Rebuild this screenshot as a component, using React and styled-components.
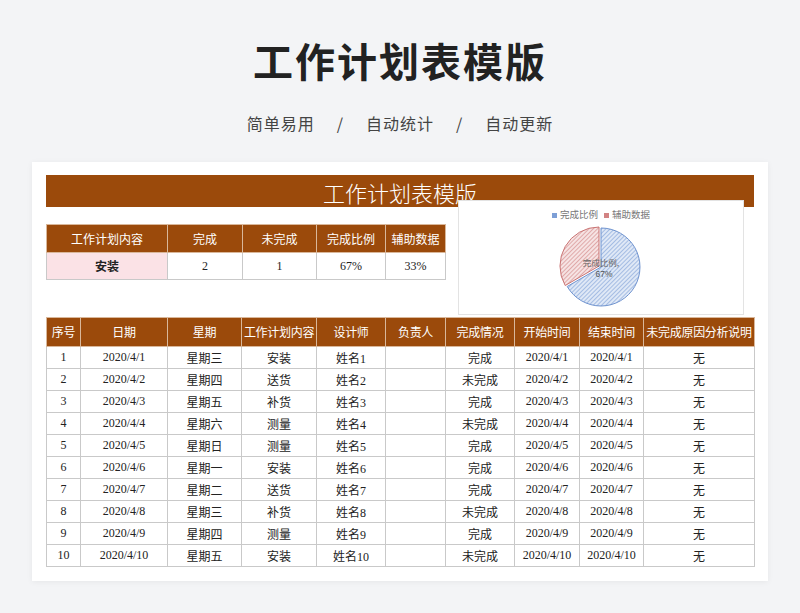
import React from 'react'
import styled, { createGlobalStyle } from 'styled-components'

const Global = createGlobalStyle`
  html, body { margin: 0; padding: 0; background: #f3f4f6; }
  body { font-family: "Liberation Serif", "Noto Sans CJK SC", serif; }
`

const BROWN = '#9b4a0b'

const Page = styled.div`
  width: 800px;
  height: 613px;
  overflow: hidden;
  display: flex;
  flex-direction: column;
  align-items: center;
`

const Title = styled.h1`
  margin: 34px 0 0;
  font: 700 40px/52px "Noto Sans CJK SC", sans-serif;
  color: #222;
  letter-spacing: 2px;
`

const Subtitle = styled.div`
  margin-top: 27px;
  display: flex;
  gap: 22px;
  font: 400 16px/20px "Noto Sans CJK SC", sans-serif;
  color: #444;
  letter-spacing: 1px;
`

const Card = styled.div`
  margin-top: 29px;
  width: 708px;
  padding: 13px 14px 14px;
  background: #fff;
  box-shadow: 0 1px 6px rgba(0,0,0,0.06);
  position: relative;
`

const Banner = styled.div`
  height: 32px;
  background: ${BROWN};
  color: #fff;
  text-align: center;
  font: 300 22px/34px "Noto Sans CJK SC", sans-serif;
`

const Grid = styled.table`
  border-collapse: collapse;
  table-layout: fixed;
  font-size: 12px;
  color: #222;
  td, th { border: 1px solid #c9c9c9; text-align: center; padding: 0; white-space: nowrap; overflow: hidden; }
  th { background: ${BROWN}; color: #fff; font-weight: 400; border-color: #d9b79a; }
`

const Summary = styled(Grid)`
  margin-top: 17px;
  width: 399px;
  th { height: 27px; font-size: 12px; }
  td { height: 26px; }
`

const Pink = styled.td`
  background: #fbe2e6;
  font-weight: 700;
`

const Main = styled(Grid)`
  margin-top: 37px;
  width: 708px;
  th { height: 28px; font-size: 12px; letter-spacing: -0.3px; }
  td { height: 21px; }
`

const Chart = styled.div`
  position: absolute;
  left: 426px;
  top: 38px;
  width: 284px;
  height: 113px;
  background: #fff;
  border: 1px solid #e3e3e3;
  display: flex;
  flex-direction: column;
  align-items: center;
`

const Legend = styled.div`
  margin-top: 6px;
  display: flex;
  gap: 6px;
  font: 9.5px "Noto Sans CJK SC", sans-serif;
  color: #777;
`

const Key = styled.span`
  &::before { content: ''; display: inline-block; width: 5px; height: 5px; margin-right: 3px; background: ${p => p.$c}; }
`

const Pie = () => (
  <svg width="84" height="82" viewBox="-42 -41 84 82" style={{ marginTop: 5 }}>
    <defs>
      <pattern id="hb" width="3" height="3" patternUnits="userSpaceOnUse" patternTransform="rotate(45)">
        <rect width="3" height="3" fill="#dfe8f6" />
        <line x1="0" y1="0" x2="0" y2="3" stroke="#7d9fd6" strokeWidth="1.2" />
      </pattern>
      <pattern id="hr" width="3" height="3" patternUnits="userSpaceOnUse" patternTransform="rotate(45)">
        <rect width="3" height="3" fill="#f6e3e3" />
        <line x1="0" y1="0" x2="0" y2="3" stroke="#d28383" strokeWidth="1.2" />
      </pattern>
    </defs>
    <path d="M0 0 L0 -39 A39 39 0 1 1 -33.8 19.5 Z" fill="url(#hb)" stroke="#6f93cf" strokeWidth="1" />
    <path d="M-2 -1 L-35.8 18.5 A39 39 0 0 1 -2 -40 Z" fill="url(#hr)" stroke="#c97373" strokeWidth="1" />
    <text x="0" y="-1" fontSize="8.5" textAnchor="middle" fill="#666" fontFamily="Noto Sans CJK SC">完成比例,</text>
    <text x="3" y="10" fontSize="8.5" textAnchor="middle" fill="#555" fontFamily="Liberation Sans">67%</text>
  </svg>
)

const cols = [34, 87, 74, 75, 69, 60, 69, 65, 64, 111]
const heads = ['序号', '日期', '星期', '工作计划内容', '设计师', '负责人', '完成情况', '开始时间', '结束时间', '未完成原因分析说明']
const weeks = ['星期三', '星期四', '星期五', '星期六', '星期日', '星期一', '星期二', '星期三', '星期四', '星期五']
const tasks = ['安装', '送货', '补货', '测量', '测量', '安装', '送货', '补货', '测量', '安装']
const done = ['完成', '未完成', '完成', '未完成', '完成', '完成', '完成', '未完成', '完成', '未完成']

export default function App() {
  return (
    <Page>
      <Global />
      <Title>工作计划表模版</Title>
      <Subtitle><span>简单易用</span><span>/</span><span>自动统计</span><span>/</span><span>自动更新</span></Subtitle>
      <Card>
        <Banner>工作计划表模版</Banner>
        <Summary>
          <colgroup>{[121, 75, 74, 69, 60].map((w, i) => <col key={i} style={{ width: w }} />)}</colgroup>
          <thead><tr><th>工作计划内容</th><th>完成</th><th>未完成</th><th>完成比例</th><th>辅助数据</th></tr></thead>
          <tbody><tr><Pink>安装</Pink><td>2</td><td>1</td><td>67%</td><td>33%</td></tr></tbody>
        </Summary>
        <Chart>
          <Legend><Key $c="#7d9fd6">完成比例</Key><Key $c="#d28383">辅助数据</Key></Legend>
          <Pie />
        </Chart>
        <Main>
          <colgroup>{cols.map((w, i) => <col key={i} style={{ width: w }} />)}</colgroup>
          <thead><tr>{heads.map(h => <th key={h}>{h}</th>)}</tr></thead>
          <tbody>
            {tasks.map((t, i) => (
              <tr key={i}>
                <td>{i + 1}</td>
                <td>2020/4/{i + 1}</td>
                <td>{weeks[i]}</td>
                <td>{t}</td>
                <td>姓名{i + 1}</td>
                <td></td>
                <td>{done[i]}</td>
                <td>2020/4/{i + 1}</td>
                <td>2020/4/{i + 1}</td>
                <td>无</td>
              </tr>
            ))}
          </tbody>
        </Main>
      </Card>
    </Page>
  )
}
